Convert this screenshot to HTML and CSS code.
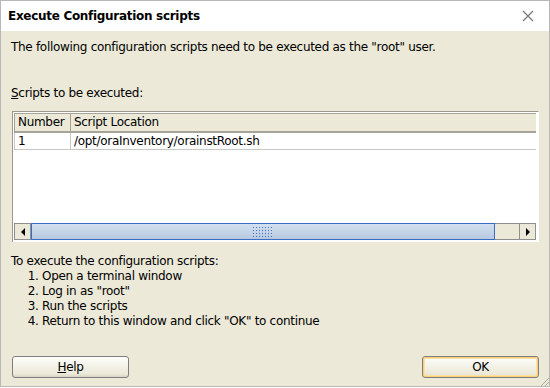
FILE: index.html
```html
<!DOCTYPE html>
<html lang="en">
<head>
  <meta charset="UTF-8">
  <title>Execute Configuration scripts</title>
  <link rel="stylesheet" href="styles.css">
</head>
<body>
  <div class="window">
    <!-- Title bar -->
    <div class="titlebar">
      <span class="title">Execute Configuration scripts</span>
      <svg class="close" width="12" height="12" viewBox="0 0 12 12">
        <path d="M1 1 L11 11 M11 1 L1 11" stroke="#7a7a7a" stroke-width="1.3" fill="none"/>
      </svg>
    </div>

    <div class="content">
      <p class="intro">The following configuration scripts need to be executed as the "root" user.</p>
      <p class="label"><u>S</u>cripts to be executed:</p>

      <!-- Scripts table -->
      <div class="table-panel">
        <div class="row header">
          <div class="cell num">Number</div>
          <div class="cell loc">Script Location</div>
        </div>
        <div class="row">
          <div class="cell num">1</div>
          <div class="cell loc">/opt/oraInventory/orainstRoot.sh</div>
        </div>
        <div class="table-space"></div>
        <div class="hscroll">
          <div class="sb-btn"><span class="arrow-left"></span></div>
          <div class="sb-thumb"><span class="grip"></span></div>
          <div class="sb-track"></div>
          <div class="sb-btn"><span class="arrow-right"></span></div>
        </div>
      </div>

      <p class="steps-title">To execute the configuration scripts:</p>
      <ol class="steps">
        <li>Open a terminal window</li>
        <li>Log in as "root"</li>
        <li>Run the scripts</li>
        <li>Return to this window and click "OK" to continue</li>
      </ol>

      <div class="buttons">
        <button class="btn"><u>H</u>elp</button>
        <button class="btn default">OK</button>
      </div>
    </div>
    <span class="grip-corner"></span>
  </div>
</body>
</html>
```

FILE: styles.css
```css
body {
  margin: 0;
  background-color: #ffffff;
  font-family: "DejaVu Sans", sans-serif;
  font-size: 12px;
  letter-spacing: -0.3px;
  color: #000000;
}

.window {
  position: relative;
  width: 548px;
  height: 385px;
  border: 1px solid #b8b8b8;
  background-color: #ece9d8;
  display: flex;
  flex-direction: column;
}

.titlebar {
  height: 30px;
  background-color: #ffffff;
  display: flex;
  align-items: center;
  justify-content: space-between;
  padding: 0 15px 0 7px;
  flex-shrink: 0;
}

.title {
  font-weight: bold;
  font-size: 12px;
  letter-spacing: -0.3px;
}

.content {
  padding: 0 10px 0 10px;
  display: flex;
  flex-direction: column;
  flex: 1;
}

.intro {
  margin: 9px 0 0 0;
  line-height: 15px;
}

.label {
  margin: 31px 0 0 0;
  line-height: 15px;
}

.table-panel {
  margin: 10px 0 0 1px;
  height: 128px;
  background-color: #ffffff;
  border-top: 1px solid #9c9a8f;
  border-left: 1px solid #9c9a8f;
  border-right: 1px solid #ffffff;
  display: flex;
  flex-direction: column;
  padding: 1px 2px 1px 1px;
}

.row {
  display: flex;
  height: 16px;
  border-bottom: 1px solid #c8c8c8;
  border-left: 1px solid #c8c8c8;
}

.row.header {
  height: 17px;
  background-color: #ece9d8;
  border-top: 1px solid #a6a497;
  border-bottom: 2px solid #a6a497;
  border-left: 1px solid #a6a497;
}

.cell {
  line-height: 16px;
  padding-left: 3px;
  white-space: nowrap;
}

.header .cell {
  line-height: 17px;
}

.cell.num {
  width: 52px;
  border-right: 1px solid #c8c8c8;
}

.header .cell.num {
  border-right: 1px solid #a6a497;
}

.cell.loc {
  flex: 1;
}

.table-space {
  flex: 1;
}

.hscroll {
  display: flex;
  height: 17px;
  margin-bottom: 1px;
}

.sb-btn {
  width: 15px;
  background-color: #ece9d8;
  border: 1px solid #8f8f8f;
  display: flex;
  align-items: center;
  justify-content: center;
}

.arrow-left {
  width: 0;
  height: 0;
  border-top: 4px solid transparent;
  border-bottom: 4px solid transparent;
  border-right: 4px solid #000000;
}

.arrow-right {
  width: 0;
  height: 0;
  border-top: 4px solid transparent;
  border-bottom: 4px solid transparent;
  border-left: 4px solid #000000;
}

.sb-thumb {
  width: 462px;
  border: 1px solid #3a6ec4;
  background: linear-gradient(#d2e0f0, #b7c9e0);
  display: flex;
  align-items: center;
  justify-content: center;
}

.grip {
  width: 22px;
  height: 11px;
  background-image: radial-gradient(circle, #4a72c8 0.7px, transparent 0.8px);
  background-size: 3px 3px;
}

.sb-track {
  flex: 1;
  background-color: #ece9d8;
  border-top: 1px solid #8f8f8f;
  border-bottom: 1px solid #8f8f8f;
}

.steps-title {
  margin: 12px 0 0 0;
  line-height: 15px;
}

.steps {
  margin: 0;
  padding-left: 31px;
  line-height: 15px;
}

.buttons {
  margin-top: auto;
  margin-bottom: 8px;
  display: flex;
  justify-content: space-between;
  padding-left: 1px;
}

.btn {
  width: 117px;
  height: 22px;
  font-family: "DejaVu Sans", sans-serif;
  font-size: 12px;
  letter-spacing: -0.3px;
  color: #000000;
  border: 1px solid #7f7f7f;
  border-radius: 3px;
  background: linear-gradient(#fdfdfb, #ece9d8 85%, #d8d4c4);
  padding: 0;
}

.btn.default {
  box-shadow: inset 0 0 0 1px #f8cf76, inset 0 0 0 2px #fbe3a4;
}

.grip-corner {
  position: absolute;
  right: 0;
  bottom: 0;
  width: 10px;
  height: 10px;
  background: repeating-linear-gradient(135deg, transparent 0 2px, #a9a69a 2px 3px);
  clip-path: polygon(100% 0, 100% 100%, 0 100%);
}
```
